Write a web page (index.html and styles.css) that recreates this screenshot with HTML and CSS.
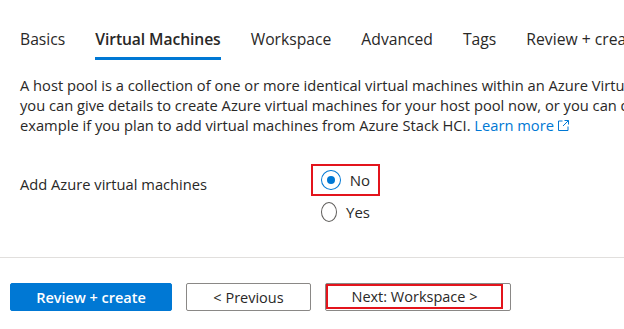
FILE: index.html
```html
<!DOCTYPE html>
<html lang="en">
<head>
    <meta charset="UTF-8">
    <title>Create a host pool - Virtual Machines</title>
    <link rel="stylesheet" href="styles.css">
</head>
<body>
    <nav class="tabs">
        <a class="tab" href="#">Basics</a>
        <a class="tab active" href="#">Virtual Machines</a>
        <a class="tab" href="#">Workspace</a>
        <a class="tab" href="#">Advanced</a>
        <a class="tab" href="#">Tags</a>
        <a class="tab" href="#">Review + create</a>
    </nav>

    <main class="content">
        <p class="intro">A host pool is a collection of one or more identical virtual machines within an Azure Virtual Desktop environment. Here<br>you can give details to create Azure virtual machines for your host pool now, or you can do it later, for<br>example if you plan to add virtual machines from Azure Stack HCI. <a class="learn" href="#">Learn more<svg class="ext" width="13" height="13" viewBox="0 0 13 13"><path d="M5.5 2h-4v9.5H11v-4" fill="none" stroke="currentColor" stroke-width="1"/><path d="M7.5 1.5h4v4M11.5 1.5 6 7" fill="none" stroke="currentColor" stroke-width="1"/></svg></a></p>

        <div class="field">
            <div class="field-label">Add Azure virtual machines</div>
            <div class="radios">
                <label class="radio highlight"><span class="dot checked"></span>No</label>
                <label class="radio"><span class="dot"></span>Yes</label>
            </div>
        </div>
    </main>

    <footer class="actions">
        <button class="btn primary">Review + create</button>
        <button class="btn prev">&lt; Previous</button>
        <button class="btn next"><span class="highlight-box">Next: Workspace &gt;</span></button>
    </footer>
</body>
</html>
```

FILE: styles.css
```css
body {
    margin: 0;
    font-family: "Open Sans", "Noto Sans", sans-serif;
    color: #292827;
    background: #fff;
    width: 624px;
    height: 329px;
    overflow: hidden;
}
.tabs {
    display: flex;
    gap: 30px;
    padding: 28px 0 0 20px;
    white-space: nowrap;
}
.tab {
    color: #292827;
    text-decoration: none;
    font-size: 15.7px;
    line-height: 22px;
    padding-bottom: 7px;
    border-bottom: 3px solid transparent;
}
.tab.active {
    font-weight: 600;
    letter-spacing: -0.1px;
    border-bottom-color: #0078d4;
}
.content {
    padding: 0 0 0 20px;
}
.intro {
    margin: 15px 0 0;
    font-size: 14.7px;
    line-height: 20px;
    white-space: nowrap;
}
.learn {
    color: #0078d4;
    text-decoration: none;
}
.ext {
    margin-left: 3px;
    vertical-align: -1px;
}
.field {
    display: flex;
    margin-top: 29px;
}
.field-label {
    width: 291px;
    font-size: 14.7px;
    line-height: 22px;
    padding-top: 9px;
}
.radios {
    display: flex;
    flex-direction: column;
}
.radio {
    display: flex;
    align-items: center;
    gap: 9px;
    font-size: 15px;
    height: 32px;
    padding: 0 8px;
    box-sizing: border-box;
    width: 69px;
    border: 2px solid transparent;
}
.radio.highlight {
    border-color: #e3141c;
}
.dot {
    width: 20px;
    height: 20px;
    border-radius: 50%;
    border: 1px solid #605e5c;
    box-sizing: border-box;
    position: relative;
}
.dot.checked {
    border-color: #0078d4;
}
.dot.checked::after {
    content: "";
    position: absolute;
    left: 5px;
    top: 5px;
    width: 8px;
    height: 8px;
    border-radius: 50%;
    background: #0078d4;
}
.actions {
    margin-top: 29px;
    border-top: 1px solid #e1dfdd;
    padding: 25px 0 0 10px;
    display: flex;
    gap: 14px;
}
.btn {
    font-family: inherit;
    font-size: 14.5px;
    color: #292827;
    background: #fff;
    border: 1px solid #8a8886;
    border-radius: 2px;
    height: 28px;
    padding: 0;
}
.btn.primary {
    width: 162px;
    background: #0078d4;
    border-color: #0078d4;
    color: #fff;
    font-weight: 600;
}
.btn.prev {
    width: 125px;
}
.btn.next {
    width: 186px;
    position: relative;
}
.highlight-box {
    position: absolute;
    left: 0;
    top: 0;
    width: 177px;
    height: 25px;
    box-sizing: border-box;
    border: 2px solid #e3141c;
    display: flex;
    align-items: center;
    justify-content: center;
}
```
